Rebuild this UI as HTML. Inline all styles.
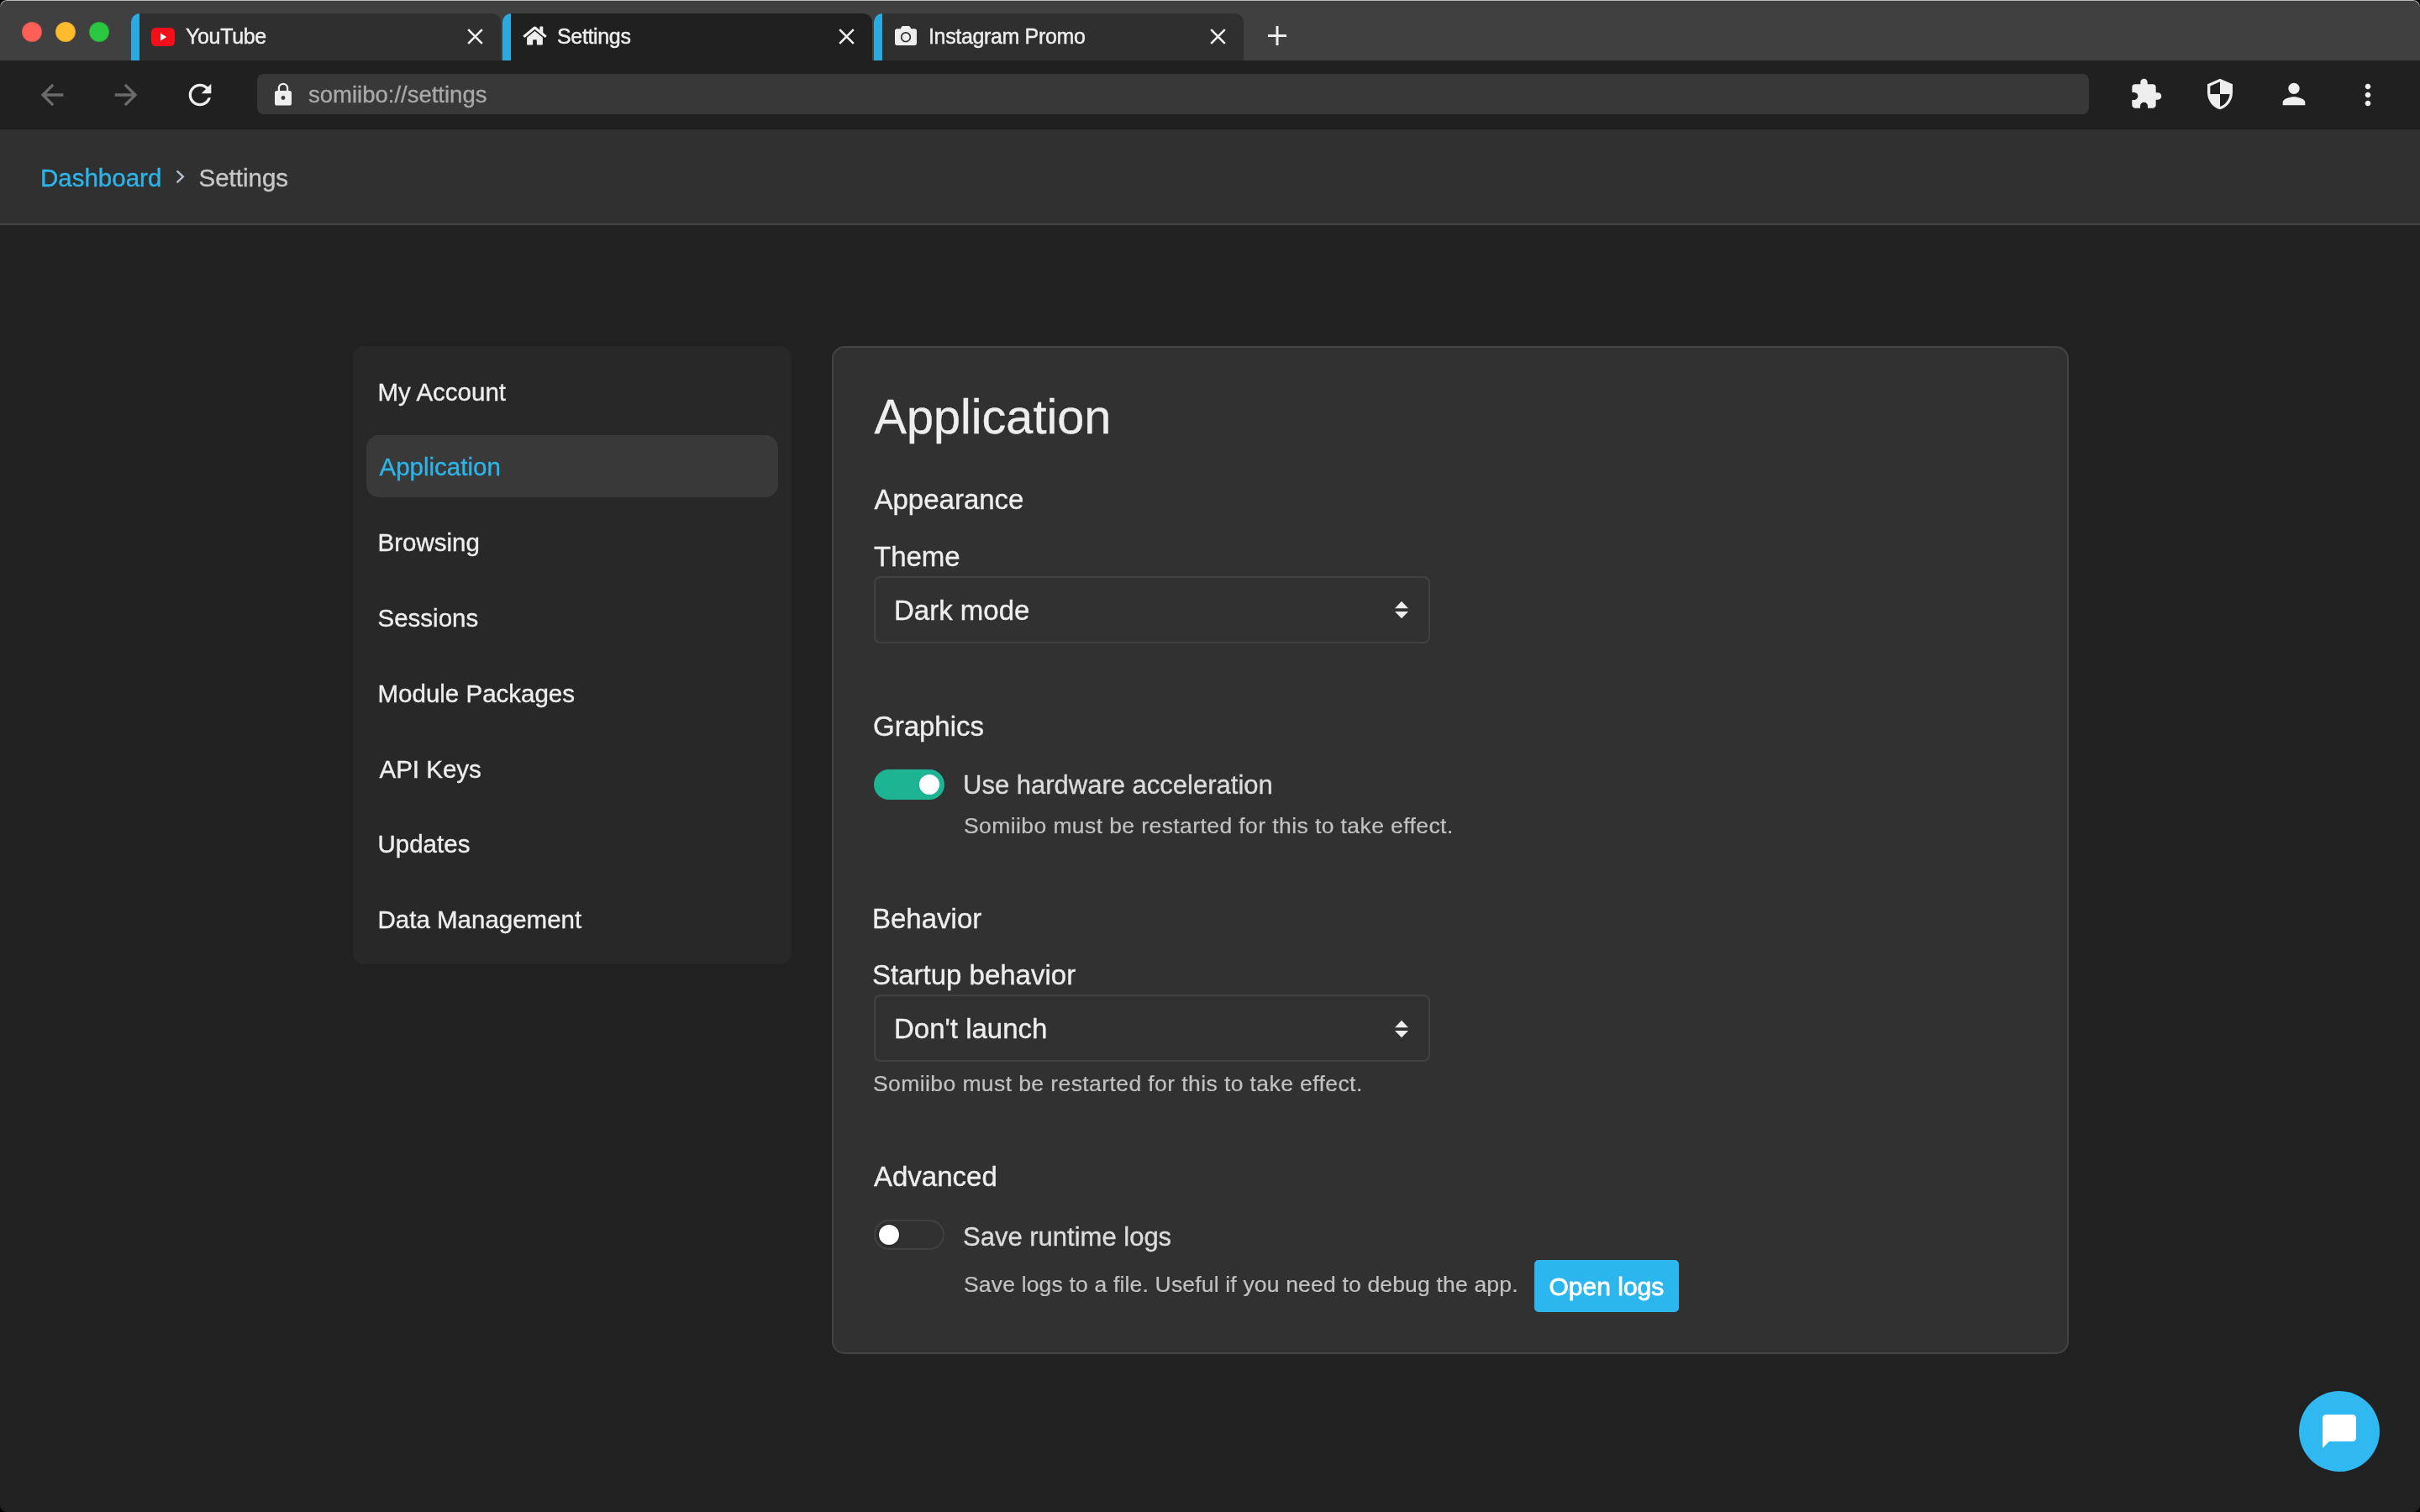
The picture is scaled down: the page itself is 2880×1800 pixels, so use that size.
<!DOCTYPE html>
<html>
<head>
<meta charset="utf-8">
<style>
html,body{margin:0;padding:0;width:2880px;height:1800px;overflow:hidden;background:#000;}
body{font-family:"Liberation Sans",sans-serif;}
#win{will-change:transform;position:absolute;left:0;top:0;width:2880px;height:1800px;background:#212121;border-radius:8px;overflow:hidden;}
.a{position:absolute;}
.t{position:absolute;line-height:1;white-space:pre;-webkit-text-stroke:0.35px currentColor;}
#tabbar{left:0;top:0;width:2880px;height:72px;background:#404040;}
.light{position:absolute;width:24px;height:24px;border-radius:50%;top:26px;box-sizing:border-box;border:1px solid rgba(0,0,0,0.12);}
.tab{position:absolute;top:16px;height:56px;width:440px;border-radius:10px 10px 0 0;overflow:hidden;background:#2f2f2f;}
.tab .stripe{position:absolute;left:0;top:0;width:10px;height:56px;background:#2ca9dd;}
.tab .title{position:absolute;left:65px;top:14.8px;font-size:25px;letter-spacing:-0.35px;color:#eeeeee;line-height:1;white-space:pre;-webkit-text-stroke:0.45px currentColor;}
.tab .x{position:absolute;left:400px;top:18px;}
#toolbar{left:0;top:72px;width:2880px;height:81px;background:#202020;border-bottom:1px solid #1a1a1a;}
#header{left:0;top:154px;width:2880px;height:112px;background:#303030;border-bottom:2px solid #444444;}
#sidebar{left:420px;top:412px;width:522px;height:736px;background:#282828;border-radius:14px;}
.item{position:absolute;left:16px;width:490px;height:74px;border-radius:15px;}
.item .lbl{position:absolute;left:13.5px;top:23.6px;font-size:29.5px;color:#eeeeee;line-height:1;white-space:pre;-webkit-text-stroke:0.35px currentColor;}
#panel{left:990px;top:412px;width:1472px;height:1200px;background:#313131;border:2px solid #434343;border-radius:15px;box-sizing:border-box;}
.h2{font-size:33px;color:#eeeeee;}
.sel{position:absolute;left:1040px;width:662px;height:80px;border:2px solid #414141;border-radius:8px;box-sizing:border-box;background:transparent;}
.desc{font-size:26.5px;letter-spacing:0.3px;color:#c2c2c2;-webkit-text-stroke:0.2px currentColor;}
</style>
</head>
<body>
<div id="win">
  <!-- TAB BAR -->
  <div id="tabbar" class="a">
    <div class="light" style="left:26px;background:#fe5f57;"></div>
    <div class="light" style="left:66px;background:#febc2e;"></div>
    <div class="light" style="left:106px;background:#2ac840;"></div>
  </div>
  <div class="tab" style="left:156px;">
    <div class="stripe"></div>
    <svg class="a" style="left:24px;top:17px;" width="28" height="22" viewBox="0 0 28 22"><rect x="0" y="0" width="28" height="22" rx="5.5" fill="#f40f1a"/><path d="M11 6.5L18.2 11L11 15.5Z" fill="#ffffff"/></svg>
    <div class="title">YouTube</div>
    <svg class="x" width="19" height="19" viewBox="0 0 19 19"><path d="M1.2 1.2L17.8 17.8M17.8 1.2L1.2 17.8" stroke="#eeeeee" stroke-width="2.6" fill="none"/></svg>
  </div>
  <div class="tab" style="left:598px;background:#202020;">
    <div class="stripe"></div>
    <svg class="a" style="left:23.5px;top:14px;" width="29" height="25" viewBox="0 0 576 512"><path fill="#eeeeee" d="M280.37 148.26L96 300.11V464a16 16 0 0 0 16 16l112.06-.29a16 16 0 0 0 15.92-16V368a16 16 0 0 1 16-16h64a16 16 0 0 1 16 16v95.64a16 16 0 0 0 16 16.05L464 480a16 16 0 0 0 16-16V300L295.67 148.26a12.19 12.19 0 0 0-15.3 0zM571.6 251.47L488 182.56V44.05a12 12 0 0 0-12-12h-56a12 12 0 0 0-12 12v72.61L318.47 43a48 48 0 0 0-61 0L4.34 251.47a12 12 0 0 0-1.6 16.9l25.5 31A12 12 0 0 0 45.15 301l235.22-193.74a12.19 12.19 0 0 1 15.3 0L530.9 301a12 12 0 0 0 16.9-1.6l25.5-31a12 12 0 0 0-1.7-16.93z"/></svg>
    <div class="title">Settings</div>
    <svg class="x" width="19" height="19" viewBox="0 0 19 19"><path d="M1.2 1.2L17.8 17.8M17.8 1.2L1.2 17.8" stroke="#eeeeee" stroke-width="2.6" fill="none"/></svg>
  </div>
  <div class="tab" style="left:1040px;">
    <div class="stripe"></div>
    <svg class="a" style="left:25px;top:15px;" width="26" height="23" viewBox="0 32 512 448" preserveAspectRatio="none"><path fill="#eeeeee" d="M512 144v288c0 26.5-21.5 48-48 48H48c-26.5 0-48-21.5-48-48V144c0-26.5 21.5-48 48-48h88l12.3-32.9c7-18.7 24.9-31.1 44.9-31.1h125.5c20 0 37.9 12.4 44.9 31.1L376 96h88c26.5 0 48 21.5 48 48zM376 288c0-66.2-53.8-120-120-120s-120 53.8-120 120 53.8 120 120 120 120-53.8 120-120zm-32 0c0 48.5-39.5 88-88 88s-88-39.5-88-88 39.5-88 88-88 88 39.5 88 88z"/></svg>
    <div class="title">Instagram Promo</div>
    <svg class="x" width="19" height="19" viewBox="0 0 19 19"><path d="M1.2 1.2L17.8 17.8M17.8 1.2L1.2 17.8" stroke="#eeeeee" stroke-width="2.6" fill="none"/></svg>
  </div>
  <svg class="a" style="left:1509px;top:31px;" width="22" height="23" viewBox="0 0 22 23"><path d="M11 0V23M0 11.5H22" stroke="#eeeeee" stroke-width="3" fill="none"/></svg>

  <!-- TOOLBAR -->
  <div id="toolbar" class="a"></div>
  <div class="a" style="left:306px;top:88px;width:2180px;height:48px;border-radius:8px;background:#383838;"></div>
  <div class="t" style="left:367px;top:98.7px;font-size:27.5px;color:#a9a9a9;">somiibo://settings</div>
  <svg class="a" style="left:41.5px;top:92.5px;" width="40" height="40" viewBox="0 0 24 24"><path fill="#6b6b6b" d="M20 11H7.83l5.59-5.59L12 4l-8 8 8 8 1.41-1.41L7.83 13H20v-2z"/></svg>
  <svg class="a" style="left:129.5px;top:92.5px;" width="40" height="40" viewBox="0 0 24 24"><path fill="#6b6b6b" d="M12 4l-1.41 1.41L16.17 11H4v2h12.17l-5.58 5.59L12 20l8-8z"/></svg>
  <svg class="a" style="left:217.5px;top:92.5px;" width="40" height="40" viewBox="0 0 24 24"><path fill="#eeeeee" d="M17.65 6.35C16.2 4.9 14.21 4 12 4c-4.42 0-7.99 3.58-7.99 8s3.57 8 7.99 8c3.73 0 6.84-2.55 7.73-6h-2.08c-.82 2.33-3.04 4-5.65 4-3.31 0-6-2.69-6-6s2.69-6 6-6c1.66 0 3.14.69 4.22 1.78L13 11h7V4l-2.35 2.35z"/></svg>
  <svg class="a" style="left:320px;top:95px;" width="34" height="34" viewBox="0 0 34 34"><rect x="7" y="13" width="20" height="17.6" rx="2.6" fill="#eeeeee"/><path d="M11.9 13.5V10a5.1 5.1 0 0 1 10.2 0V13.5" stroke="#eeeeee" stroke-width="2.3" fill="none"/><circle cx="17" cy="21.5" r="2.4" fill="#383838"/></svg>
  <svg class="a" style="left:2534px;top:92px;" width="40" height="40" viewBox="0 0 24 24"><path fill="#eeeeee" d="M20.5 11H19V7c0-1.1-.9-2-2-2h-4V3.5C13 2.12 11.88 1 10.5 1S8 2.12 8 3.5V5H4c-1.1 0-1.99.9-1.99 2v3.8H3.5c1.49 0 2.7 1.21 2.7 2.7s-1.21 2.7-2.7 2.7H2V20c0 1.1.9 2 2 2h3.8v-1.5c0-1.49 1.21-2.7 2.7-2.7 1.49 0 2.7 1.21 2.7 2.7V22H17c1.1 0 2-.9 2-2v-4h1.5c1.38 0 2.5-1.12 2.5-2.5S21.88 11 20.5 11z"/></svg>
  <svg class="a" style="left:2622px;top:92px;" width="40" height="40" viewBox="0 0 24 24"><path fill="#eeeeee" d="M12 1L3 5v6c0 5.55 3.84 10.74 9 12 5.16-1.26 9-6.450 9-12V5l-9-4zm0 10.99h7c-.53 4.12-3.28 7.79-7 8.94V12H5V6.3l7-3.11v8.8z"/></svg>
  <svg class="a" style="left:2710px;top:92px;" width="40" height="40" viewBox="0 0 24 24"><path fill="#eeeeee" d="M12 12c2.21 0 4-1.79 4-4s-1.79-4-4-4-4 1.79-4 4 1.79 4 4 4zm0 2c-2.67 0-8 1.34-8 4v2h16v-2c0-2.66-5.33-4-8-4z"/></svg>
  <svg class="a" style="left:2798px;top:93px;" width="40" height="40" viewBox="0 0 24 24"><path fill="#eeeeee" d="M12 8c1.1 0 2-.9 2-2s-.9-2-2-2-2 .9-2 2 .9 2 2 2zm0 2c-1.1 0-2 .9-2 2s.9 2 2 2 2-.9 2-2-.9-2-2-2zm0 6c-1.1 0-2 .9-2 2s.9 2 2 2 2-.9 2-2-.9-2-2-2z"/></svg>

  <!-- HEADER -->
  <div id="header" class="a"></div>
  <div class="t" style="left:48px;top:196.8px;font-size:29.5px;color:#2db5ea;">Dashboard</div>
  <div class="t" style="left:236.5px;top:196.8px;font-size:29.5px;color:#c8c8c8;">Settings</div>
  <svg class="a" style="left:208px;top:201px;" width="14" height="18" viewBox="0 0 14 18"><path d="M3.3 3.2L9.8 9.3L3.3 15.6" stroke="#b3bdca" stroke-width="2.5" fill="none" stroke-linecap="round" stroke-linejoin="miter"/></svg>

  <!-- SIDEBAR -->
  <div id="sidebar" class="a">
    <div class="item" style="top:16px;"><div class="lbl">My Account</div></div>
    <div class="item" style="top:105.8px;background:#393939;"><div class="lbl" style="color:#2db5ea;left:15.5px;">Application</div></div>
    <div class="item" style="top:195.6px;"><div class="lbl">Browsing</div></div>
    <div class="item" style="top:285.4px;"><div class="lbl">Sessions</div></div>
    <div class="item" style="top:375.2px;"><div class="lbl">Module Packages</div></div>
    <div class="item" style="top:465px;"><div class="lbl" style="left:15.5px;">API Keys</div></div>
    <div class="item" style="top:554.8px;"><div class="lbl">Updates</div></div>
    <div class="item" style="top:644.6px;"><div class="lbl">Data Management</div></div>
  </div>

  <!-- PANEL -->
  <div id="panel" class="a"></div>
  <div class="t" style="left:1040.5px;top:467.6px;font-size:57.6px;color:#eeeeee;">Application</div>
  <div class="t h2" style="left:1040.5px;top:578.2px;">Appearance</div>
  <div class="t h2" style="left:1040px;top:646.1px;">Theme</div>
  <div class="sel" style="top:686px;"></div>
  <div class="t" style="left:1064px;top:710.1px;font-size:33px;color:#eeeeee;">Dark mode</div>
  <svg class="a" style="left:1659px;top:715px;" width="18" height="22" viewBox="0 0 18 22"><path d="M1 9.2L9 0.7L17 9.2Z M1 12.9L9 21.2L17 12.9Z" fill="#eeeeee"/></svg>

  <div class="t h2" style="left:1039px;top:848.4px;">Graphics</div>
  <div class="a" style="left:1040px;top:916px;width:83.5px;height:36px;border-radius:18px;background:#1db493;"></div>
  <div class="a" style="left:1093.8px;top:921.5px;width:24.4px;height:24.4px;border-radius:50%;background:#ffffff;"></div>
  <div class="t" style="left:1146px;top:919.4px;font-size:31px;color:#dcdcdc;">Use hardware acceleration</div>
  <div class="t desc" style="left:1147px;top:969.8px;letter-spacing:0.41px;">Somiibo must be restarted for this to take effect.</div>

  <div class="t h2" style="left:1038px;top:1076.7px;">Behavior</div>
  <div class="t h2" style="left:1038px;top:1144.3px;">Startup behavior</div>
  <div class="sel" style="top:1184px;"></div>
  <div class="t" style="left:1064px;top:1208.2px;font-size:33px;color:#eeeeee;">Don't launch</div>
  <svg class="a" style="left:1659px;top:1213.5px;" width="18" height="22" viewBox="0 0 18 22"><path d="M1 9.2L9 0.7L17 9.2Z M1 12.9L9 21.2L17 12.9Z" fill="#eeeeee"/></svg>
  <div class="t desc" style="left:1039px;top:1277.1px;letter-spacing:0.41px;">Somiibo must be restarted for this to take effect.</div>

  <div class="t h2" style="left:1040px;top:1383.8px;">Advanced</div>
  <div class="a" style="left:1040px;top:1452px;width:83.6px;height:36px;border-radius:18px;border:2px solid #414141;box-sizing:border-box;background:transparent;"></div>
  <div class="a" style="left:1045.7px;top:1457.5px;width:24.5px;height:24.5px;border-radius:50%;background:#ffffff;box-shadow:0 0 1.5px 1px #1e1e1e;"></div>
  <div class="t" style="left:1146px;top:1456.5px;font-size:31px;color:#dcdcdc;">Save runtime logs</div>
  <div class="t desc" style="left:1147px;top:1516.1px;letter-spacing:0.175px;">Save logs to a file. Useful if you need to debug the app.</div>
  <div class="a" style="left:1826px;top:1500px;width:172px;height:62px;border-radius:5px;background:#2cb6ee;"></div>
  <div class="t" style="left:1843.5px;top:1516.9px;font-size:30px;color:#ffffff;-webkit-text-stroke:0.8px #ffffff;">Open logs</div>

  <div class="a" style="left:0;top:0;width:2880px;height:9px;box-sizing:border-box;border:1.5px solid #b8b8b8;border-bottom:none;border-radius:8px 8px 0 0;-webkit-mask-image:linear-gradient(#000 40%,transparent);"></div>
  <!-- CHAT -->
  <div class="a" style="left:2736px;top:1656px;width:96px;height:96px;border-radius:50%;background:#30b9f0;"></div>
  <svg class="a" style="left:2760px;top:1680px;" width="48" height="48" viewBox="0 0 24 24"><path fill="#ffffff" d="M20 2H4c-1.1 0-2 .9-2 2v18l4-4h14c1.1 0 2-.9 2-2V4c0-1.1-.9-2-2-2z"/></svg>
</div>
</body>
</html>
